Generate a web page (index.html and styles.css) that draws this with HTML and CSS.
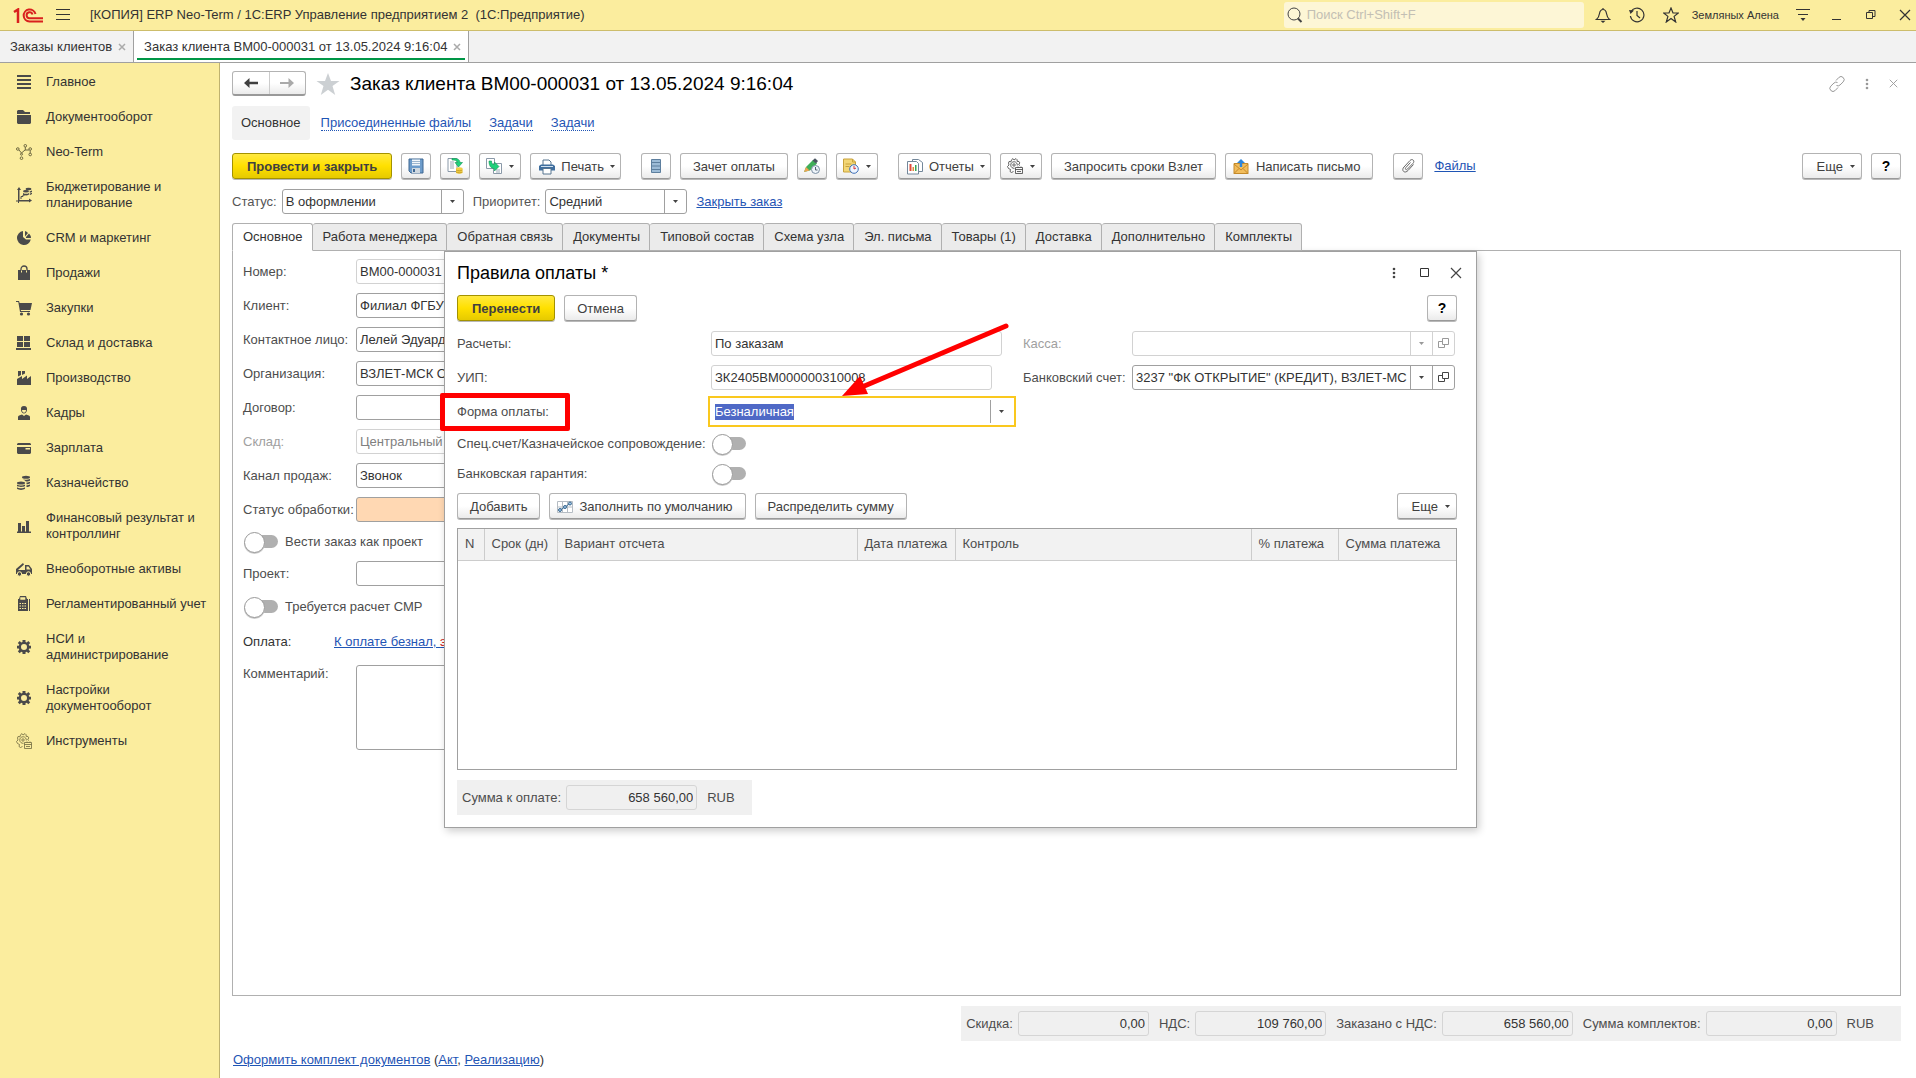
FILE: index.html
```html
<!DOCTYPE html>
<html lang="ru">
<head>
<meta charset="utf-8">
<title>Заказ клиента ВМ00-000031 от 13.05.2024 9:16:04</title>
<link rel="stylesheet" href="styles.css">
<script src="app.js" defer></script>
</head>
<body>
<svg class="sprite" aria-hidden="true">
  <symbol id="caret" viewBox="0 0 5 3"><path d="M0 0h5L2.500 3z" fill="currentColor"/></symbol>
  <symbol id="open" viewBox="0 0 11 11"><path d="M4.500.5h6v6h-6zM4.500 3.500h-4v6h6v-3" fill="none" stroke="currentColor"/></symbol>
  <symbol id="dots" viewBox="0 0 4 14"><g fill="currentColor"><circle cx="2" cy="3" r="1.300"/><circle cx="2" cy="7" r="1.300"/><circle cx="2" cy="11" r="1.300"/></g></symbol>
  <symbol id="cross" viewBox="0 0 12 12"><path d="M1 1l10 10M11 1L1 11" fill="none" stroke="currentColor" stroke-width="1.200"/></symbol>
  <symbol id="gear" viewBox="0 0 16 16"><path fill-rule="evenodd" fill="currentColor" d="M6.500 1h3v2l1.300.5L12.300 2l1.900 1.900-1.500 1.500.6 1.300H15v2.800h-1.700l-.6 1.300 1.500 1.500-1.900 1.900-1.500-1.500-1.300.5V15h-3v-1.800l-1.300-.5-1.500 1.500-1.900-1.900 1.500-1.500-.6-1.300H1V6.700h1.700l.6-1.300-1.500-1.500L3.700 2l1.500 1.500L6.500 3zM8 5a3 3 0 100 6 3 3 0 000-6z"/></symbol>
  <symbol id="geardoc" viewBox="0 0 16 16"><g fill="none" stroke="currentColor" stroke-width=".8"><path d="M6.500 13.500l-2 1-1.500-1 .5-2-2-1-1-2 1.500-1.500L1.500 5l.5-1.500 2 .3.500-2L6 .6l1 1.400 2-1.400 1.200 1.200-.2 1.500 2 .2.900 1.500-1.300 1.500 1.400 1"/><path d="M7.500 10.300A3.300 3.300 0 1110.300 7.500"/><circle cx="7" cy="7" r="1.200"/><path d="M8.500 9.500h7v6h-7zM8.500 11.500h7M10 13.500h4M11 8.500v1M14 8.500v1" /></g></symbol>
</svg>

<header class="titlebar">
  <svg class="logo" viewBox="0 0 30 15"><g fill="none" stroke="#d9201e"><path d="M1 4l4-2.500V15" stroke-width="2.500"/><path d="M22.500 6A6 6 0 1016.500 13.500H30" stroke-width="2"/><path d="M19.500 6.500A3 3 0 1016.500 10.300H30" stroke-width="2"/></g></svg>
  <button class="plain" aria-label="Меню"><svg width="14" height="12" viewBox="0 0 14 12"><path d="M0 .5h14M0 5.500h14M0 10.500h14" stroke="#333"/></svg></button>
  <span class="apptitle">[КОПИЯ] ERP Neo-Term / 1С:ERP Управление предприятием 2&nbsp; (1С:Предприятие)</span>
  <label class="search"><svg width="16" height="16" viewBox="0 0 16 16" fill="none" stroke="#444"><circle cx="7" cy="7" r="6"/><path d="M11 11.500l3.500 3.500" stroke-width="2"/></svg><input type="search" aria-label="Поиск" placeholder="Поиск Ctrl+Shift+F"></label>
  <div class="sys">
    <button class="plain" aria-label="Уведомления"><svg width="16" height="16" viewBox="0 0 16 16"><path d="M1.500 12.500c2-1.500 2.500-3 3-6 .4-2.500 1.500-4 3.500-4s3.100 1.500 3.500 4c.5 3 1 4.500 3 6zM8 1v2" fill="none" stroke="#333" stroke-width="1.200"/><path d="M5.500 13.800h5L8 16z" fill="#333"/></svg></button>
    <button class="plain" aria-label="История"><svg width="16" height="16" viewBox="0 0 16 16"><path d="M2 5a6.800 6.800 0 11-.6 4M8 4v4.500l3 2.500" fill="none" stroke="#333" stroke-width="1.200"/><path d="M0 3l5 .5L1.500 7z" fill="#333"/></svg></button>
    <button class="plain" aria-label="Избранное"><svg width="16" height="16" viewBox="0 0 16 16"><path d="M8 1l2 5h5.300l-4.200 3.400L12.700 15 8 11.500 3.300 15l1.600-5.600L.7 6H6z" fill="none" stroke="#333" stroke-width="1.200"/></svg></button>
  </div>
  <span class="user">Земляных Алена</span>
  <div class="sys wide">
    <button class="plain" aria-label="Настройки"><svg width="14" height="14" viewBox="0 0 14 14"><path d="M0 1.500h14M2 6.500h10" stroke="#333" stroke-width="1.200"/><path d="M4.500 10h5L7 13z" fill="#333"/></svg></button>
    <button class="plain" aria-label="Свернуть"><svg width="10" height="10" viewBox="0 0 10 10"><path d="M0 9.500h9" stroke="#333"/></svg></button>
    <button class="plain" aria-label="Восстановить"><svg width="10" height="10" viewBox="0 0 10 10"><path d="M.5 2.500h6v6h-6zM3 2V.5h6v6H7" fill="none" stroke="#333"/></svg></button>
    <button class="plain" aria-label="Закрыть"><svg width="12" height="12"><use href="#cross"/></svg></button>
  </div>
</header>

<nav class="wintabs">
  <div class="wintab"><a href="#list">Заказы клиентов</a><button class="plain close" aria-label="Закрыть вкладку"><svg width="8" height="8" viewBox="0 0 8 8"><path d="M1 1l6 6M7 1L1 7" stroke="currentColor" stroke-width="1.500"/></svg></button></div>
  <div class="wintab current"><a href="#order">Заказ клиента ВМ00-000031 от 13.05.2024 9:16:04</a><button class="plain close" aria-label="Закрыть вкладку"><svg width="8" height="8" viewBox="0 0 8 8"><path d="M1 1l6 6M7 1L1 7" stroke="currentColor" stroke-width="1.500"/></svg></button></div>
</nav>

<div class="body">
<nav class="sidebar">
  <a href="#s1"><svg viewBox="0 0 16 16"><path d="M1 1h14v2H1zM1 5h14v2H1zM1 9h14v2H1zM1 13h14v2H1z"/></svg><span>Главное</span></a>
  <a href="#s2"><svg viewBox="0 0 16 16"><path d="M2 1h5l2 2h5v2H1V2zM1 6h14v8l-1 1H2l-1-1z"/></svg><span>Документооборот</span></a>
  <a href="#s3"><svg viewBox="0 0 16 16" class="line olive"><circle cx="1.800" cy="5" r="1.300"/><circle cx="5.500" cy="14.200" r="1.300"/><circle cx="5.500" cy="10.200" r="1"/><circle cx="9.300" cy="1.800" r="1.300"/><circle cx="14.200" cy="5" r="1.300"/><circle cx="14.200" cy="10.500" r="1.300"/><path d="M3 6l2.500 3L9 6h4M9.300 3v3M14.200 6.300v3"/></svg><span>Neo-Term</span></a>
  <a href="#s4"><svg viewBox="0 0 16 16"><path d="M3 0l2 3H3.500v10H13v-1.500l3 2-3 2V14.500H3V16H2v-1.500H0v-1h2V3H1z"/><path d="M5 12V9.500h2V8h2V7" fill="none" stroke="#4a4a4a"/><ellipse cx="12.500" cy="2" rx="3" ry="1.300"/><ellipse cx="10" cy="4.300" rx="3" ry="1.200"/><path d="M7 6c2 1.300 5 1 6 0v1.500c-2 1.500-5 1-6 0zM13.500 4.500l2.500-1V5l-2 .8zM13.500 6.800l2.500-1v1.200l-2 1z"/></svg><span>Бюджетирование и планирование</span></a>
  <a href="#s5"><svg viewBox="0 0 16 16"><path d="M7 1a7 7 0 107.800 8.500H10L7 7zM9 1v5.500l3-3.500A6 6 0 009 1zM13 3.500L10 7v1h5a7 7 0 00-2-4.500z"/></svg><span>CRM и маркетинг</span></a>
  <a href="#s6"><svg viewBox="0 0 16 16"><path d="M2 5h12v10H2z"/><path d="M5 8V4a3 3 0 016 0v4" fill="none" stroke="#4a4a4a" stroke-width="1.300"/><path d="M5.500 5.500v2M10.500 5.500v2" stroke="#fbed9e"/></svg><span>Продажи</span></a>
  <a href="#s7"><svg viewBox="0 0 16 16"><path d="M0 1h3l.6 2H16l-1.500 7H4.800l.2 1h9v1H4L2.300 2H0z"/><circle cx="5.500" cy="14" r="1.600"/><circle cx="12.500" cy="14" r="1.600"/></svg><span>Закупки</span></a>
  <a href="#s8"><svg viewBox="0 0 16 16"><path d="M1 1h6v5H1zM8 1h6v5H8zM1 7h6v5H1zM8 7h6v5H8zM0 13h15v2H0z"/></svg><span>Склад и доставка</span></a>
  <a href="#s9"><svg viewBox="0 0 16 16"><path d="M2 1h3v4L2 6.500zM6 1h3v2.500L6 5zM1 9l5-3v3l5-3.500V9l4-3v9H1z"/></svg><span>Производство</span></a>
  <a href="#s10"><svg viewBox="0 0 16 16"><path d="M8 1c2.500 0 3.300 1.500 3 4-.3 2-1.500 3.500-3 3.500S5.300 7 5 5c-.3-2.500.5-4 3-4zM2 15v-3c0-1.500 2-2 4-2.500l2 1.500 2-1.500c2 .5 4 1 4 2.500v3z"/><path d="M6 5h4c0 2-1 2.700-2 2.700S6 7 6 5z" fill="#fbed9e"/></svg><span>Кадры</span></a>
  <a href="#s11"><svg viewBox="0 0 16 16"><path fill-rule="evenodd" d="M2 3h12l1 1v1H1V4zM1 7h14v6l-1 1H2l-1-1zM9.500 8v1.500H14V8z"/></svg><span>Зарплата</span></a>
  <a href="#s12"><svg viewBox="0 0 16 16"><ellipse cx="10" cy="2.300" rx="4" ry="1.500"/><path d="M7 4c2 1.200 5 1 7 0v1.500c-1 1-3 1.200-4 1zM10.500 7.500c1.500 0 2.500-.3 3.500-.8v1.500c-1 .8-2 1-3.500 1zM10.500 10.200c1.500 0 2.500-.3 3.500-.8V11c-1 .8-2 1-3.500 1z"/><ellipse cx="5" cy="8" rx="4" ry="1.500"/><path d="M1 9.500c2 1.300 6 1.300 8 0V11c-2 1.200-6 1.200-8 0zM1 12.300c2 1.300 6 1.300 8 0v1.500c-2 1.500-6 1.500-8 0z"/></svg><span>Казначейство</span></a>
  <a href="#s13"><svg viewBox="0 0 16 16"><path d="M1 13.500h14V15H1zM2 5h3v9H2zM6 8h3v6H6zM10 3h3v11h-3z"/></svg><span>Финансовый результат и контроллинг</span></a>
  <a href="#s14"><svg viewBox="0 0 16 16"><path d="M0 8l7-6 1 1.500-6 5.500h7V4h4l3 4v5H0zM10.500 5.500v3h4l-2-3z" fill-rule="evenodd"/><circle cx="3.500" cy="13" r="2.200" stroke="#fbed9e"/><circle cx="12.500" cy="13" r="2.200" stroke="#fbed9e"/></svg><span>Внеоборотные активы</span></a>
  <a href="#s15"><svg viewBox="0 0 16 16"><path d="M4 0h6l1 3h1v12H2V3h1zM4.300 1.300v2.500h5V1.300zM13 3h1v12h-1z" fill-rule="evenodd"/><path d="M3.500 7.500h7M3.500 10h7M3.500 12.500h7" stroke="#fbed9e" stroke-dasharray="1.500 1"/></svg><span>Регламентированный учет</span></a>
  <a href="#s16"><svg><use href="#gear"/></svg><span>НСИ и<br>администрирование</span></a>
  <a href="#s17"><svg><use href="#gear"/></svg><span>Настройки<br>документооборот</span></a>
  <a href="#s18"><svg class="olive"><use href="#geardoc"/></svg><span>Инструменты</span></a>
</nav>

<main class="page">
  <div class="head">
    <div class="navpair"><button aria-label="Назад"><svg width="14" height="10" viewBox="0 0 14 10"><path d="M5.500 0v3.800H14v2.400H5.500V10L0 5z" fill="#404040"/></svg></button><button aria-label="Вперед"><svg width="14" height="10" viewBox="0 0 14 10"><path d="M8.500 0v4H0v2h8.500v4L14 5z" fill="#aaa"/></svg></button></div>
    <svg class="fav" viewBox="0 0 24 22"><path d="M12 0l3 8h8.500l-7 5 2.700 9L12 16.800 4.800 22l2.700-9-7-5H9z" fill="#ccd0d3"/></svg>
    <h1>Заказ клиента ВМ00-000031 от 13.05.2024 9:16:04</h1>
    <div class="headtools">
      <button class="plain" aria-label="Получить ссылку"><svg width="16" height="16" viewBox="0 0 16 16" fill="none" stroke="#999"><path d="M7 4.500l2.800-3a3 3 0 014.400 4.400L11 9a3 3 0 01-3.500.5M9 11.500l-2.800 3a3 3 0 01-4.400-4.400L5 7a3 3 0 013.500-.5"/></svg></button>
      <button class="plain" aria-label="Действия"><svg width="4" height="14"><use href="#dots"/></svg></button>
      <button class="plain" aria-label="Закрыть"><svg width="9" height="9"><use href="#cross"/></svg></button>
    </div>
  </div>

  <nav class="subnav"><span class="here">Основное</span><a href="#f">Присоединенные файлы</a><a href="#t1">Задачи</a><a href="#t2">Задачи</a></nav>

  <div class="toolbar">
    <div class="group">
      <button class="btn primary">Провести и закрыть</button>
      <button class="btn icon" aria-label="Записать"><svg viewBox="0 0 16 16"><path d="M1 1h14v14H3l-2-2z" fill="#6d9ccb" stroke="#3f6791"/><path d="M4 1.500h8v6H4z" fill="#f3f7fb"/><path d="M4 3.500h8M4 5.500h8" stroke="#9db6cf"/><path d="M4 10h8v5H4z" fill="#cfd8e0"/><path d="M5 11h2v3H5z" fill="#3f6791"/></svg></button>
      <button class="btn icon" aria-label="Провести"><svg viewBox="0 0 16 16"><path d="M1 .5h9v13H1z" fill="#fff" stroke="#8a99a8"/><path d="M3 4h4M3 6h4M3 8h4M3 10h4" stroke="#9aa8b5"/><path d="M5 .5c5-.5 8 1 8 4h2.500L11.500 9 8 4.500h2.500C10 2.500 8 2 5 2z" fill="#1fd07a" stroke="#119552" stroke-width=".6"/><path d="M9 10c2-1 5-1 6.500 0v5c-1.500 1-5 1-6.500 0z" fill="#f1cf45"/><path d="M9 12c2 1 5 1 6.500 0M9 14c2 1 5 1 6.500 0" fill="none" stroke="#b78f1c" stroke-width=".7"/></svg></button>
      <button class="btn drop" aria-label="Создать на основании"><svg viewBox="0 0 16 16"><path d="M.5.5h8v10h-8z" fill="#fff" stroke="#8a99a8"/><path d="M7.500 5.500h8v10h-8z" fill="#fff" stroke="#8a99a8"/><path d="M10 12h4M10 14h4" stroke="#9aa8b5"/><path d="M3 3h2.500c0 2.500 1 3.500 3 3.500V4l4.500 4.500L8.500 13v-2.500C5 10.500 3 8 3 3z" fill="#1fd07a" stroke="#119552" stroke-width=".6"/></svg><svg class="car"><use href="#caret"/></svg></button>
      <button class="btn wide"><svg viewBox="0 0 16 16"><path d="M4 6V1h6l2 2v3" fill="#fff" stroke="#57748f"/><path d="M2 5.500h12l2 1.500v4.500H0V7z" fill="#3f6e9e"/><path d="M2 7.500h12" stroke="#cfe0ef"/><path d="M4 9.500h8v5.500H4z" fill="#fff" stroke="#57748f"/></svg>Печать<svg class="car"><use href="#caret"/></svg></button>
    </div>
    <div class="group">
      <button class="btn icon" aria-label="Структура"><svg viewBox="0 0 16 16"><path d="M3.500 1.500h9v13h-9z" fill="#9cbbd6" stroke="#5d7f9e"/><path d="M3.500 4.500h9M3.500 8h9M3.500 11.500h9" stroke="#5d7f9e"/></svg></button>
      <button class="btn">Зачет оплаты</button>
      <button class="btn icon" aria-label="Запланировать"><svg viewBox="0 0 16 16"><path d="M0 14l2-5 7-7 4 3.500-7 7z" fill="#3fae59"/><path d="M0 14l2-5 3.500 3.500z" fill="#f0a450"/><path d="M8.500 2.500L11 .3 14 3l-2 2.500z" fill="#4a5560"/><circle cx="11.500" cy="11.500" r="4" fill="#eef4fa" stroke="#7a8ea2"/><path d="M11.500 9v3h2" fill="none" stroke="#506070"/></svg></button>
      <button class="btn drop" aria-label="Напоминание"><svg viewBox="0 0 16 16"><path d="M.5 1h9l3 3v10H.5z" fill="#f3d777" stroke="#c8a23c"/><path d="M9.500 1v3h3M2.500 6h6M2.500 8.500h4" fill="none" stroke="#c8a23c"/><circle cx="11" cy="11" r="4.300" fill="#eef5ff" stroke="#3f70b8"/><path d="M11 8v3l2-1" fill="none" stroke="#d33"/></svg><svg class="car"><use href="#caret"/></svg></button>
    </div>
    <div class="group">
      <button class="btn wide"><svg viewBox="0 0 16 16"><path d="M5.500.5h6l4 3v9h-10z" fill="#fff" stroke="#73879a"/><path d="M.5 2.500h9l2 2v10.500H.5z" fill="#fff" stroke="#73879a"/><path d="M2.500 5h2v7h-2z" fill="#e04b3a"/><path d="M5.500 8h1.500v4H5.500z" fill="#e08a3a"/><path d="M8 6h1.500v6H8z" fill="#35a853"/></svg>Отчеты<svg class="car"><use href="#caret"/></svg></button>
      <button class="btn drop" aria-label="Настройки"><svg viewBox="0 0 16 16"><use href="#geardoc"/></svg><svg class="car"><use href="#caret"/></svg></button>
      <button class="btn">Запросить сроки Взлет</button>
      <button class="btn mail"><svg viewBox="0 0 16 16"><path d="M1 4.500h14v10H1z" fill="#f2bd5c" stroke="#c48a2a"/><path d="M1 5l7 6 7-6M1 14.500l5-5M15 14.500l-5-5" fill="none" stroke="#c48a2a"/><path d="M8 0l4 4H9.200v4H6.800V4H4z" fill="#2c86dc"/></svg>Написать письмо</button>
    </div>
    <div class="group">
      <button class="btn icon" aria-label="Присоединить"><svg viewBox="0 0 16 16" fill="none" stroke="#666"><path d="M13.500 6.500L8 12.500c-1.500 1.500-3 2-4.300 1s-1.200-3 .3-4.500l6-6.500c1-1 2.300-1.300 3.200-.4s.8 2.200-.2 3.200L7.500 11c-.6.700-1.300.8-1.800.4s-.4-1.200.2-1.900L10.500 4.500"/></svg></button>
      <a class="files" href="#files">Файлы</a>
    </div>
    <div class="group end">
      <button class="btn more">Еще<svg class="car"><use href="#caret"/></svg></button>
      <button class="btn icon help">?</button>
    </div>
  </div>

  <div class="statusrow">
    <label for="st">Статус:</label>
    <div class="combo st"><select id="st"><option>В оформлении</option></select><span class="cell"><svg class="car"><use href="#caret"/></svg></span></div>
    <label for="pr" class="next">Приоритет:</label>
    <div class="combo pr"><select id="pr"><option>Средний</option></select><span class="cell"><svg class="car"><use href="#caret"/></svg></span></div>
    <a class="next" href="#close">Закрыть заказ</a>
  </div>

  <div class="tabs" role="tablist">
    <button role="tab" aria-selected="true">Основное</button><button role="tab">Работа менеджера</button><button role="tab">Обратная связь</button><button role="tab">Документы</button><button role="tab">Типовой состав</button><button role="tab">Схема узла</button><button role="tab">Эл. письма</button><button role="tab">Товары (1)</button><button role="tab">Доставка</button><button role="tab">Дополнительно</button><button role="tab">Комплекты</button>
  </div>

  <section class="panel">
    <form class="order">
      <label for="o1">Номер:</label><input class="fld ro" id="o1" value="ВМ00-000031" readonly>
      <label for="o2">Клиент:</label><input class="fld" id="o2" value="Филиал ФГБУ">
      <label for="o3">Контактное лицо:</label><input class="fld" id="o3" value="Лелей Эдуард">
      <label for="o4">Организация:</label><input class="fld" id="o4" value="ВЗЛЕТ-МСК ООО">
      <label for="o5">Договор:</label><input class="fld" id="o5">
      <label for="o6" class="off">Склад:</label><input class="fld ro off" id="o6" value="Центральный" disabled>
      <label for="o7">Канал продаж:</label><input class="fld" id="o7" value="Звонок">
      <label for="o8">Статус обработки:</label><input class="fld warn" id="o8">
      <label class="check span"><input type="checkbox" class="toggle">Вести заказ как проект</label>
      <label for="o9">Проект:</label><input class="fld" id="o9">
      <label class="check tall span"><input type="checkbox" class="toggle">Требуется расчет СМР</label>
      <div class="pay span"><span>Оплата:</span><a href="#pay">К оплате безнал, <em>этапы</em></a></div>
      <label for="o10" class="top">Комментарий:</label><textarea class="fld area" id="o10"></textarea>
    </form>
  </section>

  <div class="totals">
    <label for="t1">Скидка:</label><input class="fld sum" id="t1" value="0,00" readonly>
    <label for="t2">НДС:</label><input class="fld sum" id="t2" value="109 760,00" readonly>
    <label for="t3">Заказано с НДС:</label><input class="fld sum" id="t3" value="658 560,00" readonly>
    <label for="t4">Сумма комплектов:</label><input class="fld sum" id="t4" value="0,00" readonly>
    <span>RUB</span>
  </div>
  <div class="bottom"><a href="#kit">Оформить комплект документов</a> (<a href="#act">Акт</a>, <a href="#real">Реализацию</a>)</div>
</main>
</div>

<section class="dialog" role="dialog" aria-labelledby="dt">
  <div class="dhead"><h2 id="dt">Правила оплаты *</h2>
    <div class="dtools">
      <button class="plain" aria-label="Действия"><svg width="4" height="14"><use href="#dots"/></svg></button>
      <button class="plain" aria-label="Развернуть"><svg width="10" height="10" viewBox="0 0 10 10"><path d="M.5.5h8v8h-8z" fill="none" stroke="#333"/></svg></button>
      <button class="plain" aria-label="Закрыть"><svg width="12" height="12"><use href="#cross"/></svg></button>
    </div>
  </div>
  <div class="dbar"><button class="btn primary">Перенести</button><button class="btn">Отмена</button><button class="btn icon help end">?</button></div>
  <div class="dform">
    <label for="d1">Расчеты:</label><input class="fld ro w1" id="d1" value="По заказам" readonly>
    <label for="d2" class="off">Касса:</label><div class="combo ro"><input id="d2" disabled><span class="cell"><svg class="car"><use href="#caret"/></svg></span><span class="cell"><svg class="opn"><use href="#open"/></svg></span></div>
    <label for="d3">УИП:</label><input class="fld ro w2" id="d3" value="ЗК2405ВМ000000310008" readonly>
    <label for="d4">Банковский счет:</label><div class="combo"><input id="d4" value="3237 &quot;ФК ОТКРЫТИЕ&quot; (КРЕДИТ), ВЗЛЕТ-МСК"><span class="cell"><svg class="car"><use href="#caret"/></svg></span><span class="cell"><svg class="opn"><use href="#open"/></svg></span></div>
    <label for="form">Форма оплаты:</label><div class="combo active"><input id="form" value="Безналичная"><span class="cell"><svg class="car"><use href="#caret"/></svg></span></div>
    <label for="d6" class="row">Спец.счет/Казначейское сопровождение:</label><input type="checkbox" class="toggle" id="d6">
    <label for="d7" class="row">Банковская гарантия:</label><input type="checkbox" class="toggle" id="d7">
  </div>
  <div class="dbar"><button class="btn">Добавить</button><button class="btn fill"><svg viewBox="0 0 16 16"><path d="M.5 2.500h15v11H.5zM.5 8h15M5.500 2.500v11M10.500 2.500v11" fill="#fff" stroke="#b5bcc3"/><path d="M3 11l5-3 5-3.500" fill="none" stroke="#49779f"/><g fill="#9cc3e6" stroke="#39688f"><circle cx="3" cy="11" r="1.500"/><circle cx="8" cy="8" r="1.500"/><circle cx="13" cy="4.500" r="1.500"/></g></svg>Заполнить по умолчанию</button><button class="btn">Распределить сумму</button><button class="btn more end">Еще<svg class="car"><use href="#caret"/></svg></button></div>
  <div class="grid"><table>
    <colgroup><col class="c1"><col class="c2"><col class="c3"><col class="c4"><col class="c5"><col class="c6"><col class="c7"></colgroup>
    <thead><tr><th>N</th><th>Срок (дн)</th><th>Вариант отсчета</th><th>Дата платежа</th><th>Контроль</th><th>% платежа</th><th>Сумма платежа</th></tr></thead>
    <tbody></tbody>
  </table></div>
  <div class="totals dsum"><label for="ds">Сумма к оплате:</label><input class="fld sum" id="ds" value="658 560,00" readonly><span>RUB</span></div>
</section>

<div class="mark"></div>
<svg class="arrow" viewBox="0 0 176 82"><path d="M164 6L20 67" stroke="#f00" stroke-width="5" stroke-linecap="round"/><path d="M0 76l18-20 8 18z" fill="#f00"/></svg>
</body>
</html>
```
FILE: styles.css
```css
* { box-sizing: border-box; }
body {
  margin: 0;
  min-height: 100vh;
  display: flex;
  flex-direction: column;
  position: relative;
  font: 13px/16px "Liberation Sans", Arial, sans-serif;
  color: #333;
  background: #fff;
}
button, input, select, textarea { font: inherit; color: inherit; }
button { margin: 0; }
a { color: #1f55b5; }
.sprite { display: none; }
.plain { border: 0; background: none; padding: 0; display: flex; align-items: center; justify-content: center; }

.titlebar {
  height: 31px;
  display: flex;
  align-items: center;
  background: #fbed9e;
  border-bottom: 1px solid #cdbd6b;
  padding: 0 5px 0 13px;
}
.logo { width: 30px; height: 15px; margin-right: 13px; }
.apptitle { margin-left: 20px; }
.search {
  margin-left: auto;
  width: 300px;
  height: 26px;
  border-radius: 3px;
  background: #fdf6d6;
  display: flex;
  align-items: center;
  padding-left: 3px;
  gap: 4px;
}
.search input { flex: 1; border: 0; background: none; padding: 0; outline: 0; }
.search input::placeholder { color: #c3bfb4; }
.sys { display: flex; gap: 2px; margin-left: 3px; }
.sys .plain { width: 32px; height: 26px; }
.user { font-size: 11px; margin-left: 5px; }
.sys.wide { margin-left: 8px; margin-right: -10px; }

.wintabs { height: 32px; display: flex; background: #f2f2f2; border-bottom: 1px solid #a0a0a0; }
.wintab { display: flex; align-items: center; gap: 6px; padding: 0 7px 0 10px; border-right: 1px solid #a0a0a0; }
.wintab a { color: #333; text-decoration: none; }
.wintab .close { color: #aaa; }
.wintab.current { background: linear-gradient(#009646, #009646) center bottom 2px / calc(100% - 6px) 2px no-repeat #fff; }

.body { flex: 1; display: flex; }
.sidebar { width: 220px; flex: none; background: #fbed9e; border-right: 1px solid #bfb26f; padding-top: 2px; }
.sidebar a { display: flex; align-items: center; gap: 14px; padding: 9px 4px 10px 16px; color: #333; text-decoration: none; }
.sidebar svg { width: 16px; height: 16px; flex: none; fill: #4a4a4a; color: #4a4a4a; }
.sidebar svg.olive { color: #6e6840; }
.sidebar svg.line { fill: none; stroke: #6e6840; }

.page { flex: 1; min-width: 0; display: flex; flex-direction: column; padding: 8px 15px 0 12px; }
.head { display: flex; align-items: center; height: 25px; }
.navpair { display: flex; width: 74px; height: 25px; border: 1px solid #b3b3b3; border-bottom: 2px solid #999; border-radius: 3px; background: linear-gradient(#fff 50%, #ebebeb); }
.navpair button { flex: 1; border: 0; background: none; padding: 0; display: flex; align-items: center; justify-content: center; }
.navpair button + button { border-left: 1px solid #ccc; }
.fav { width: 24px; height: 22px; margin: 0 10px; }
h1, h2 { margin: 0; font-size: 18px; line-height: 22px; font-weight: 400; color: #000; }
h1 { font-size: 19px; }
.headtools { margin-left: auto; display: flex; align-items: center; gap: 20px; margin-right: 3px; color: #999; }

.subnav { display: flex; align-items: center; height: 34px; margin: 10px 0 13px; }
.subnav .here { background: #f2f2f2; border-radius: 3px; padding: 9px; margin-right: 11px; }
.subnav a { text-decoration: none; border-bottom: 1px dotted #1f55b5; line-height: 15px; margin-right: 18px; }

.toolbar { display: flex; gap: 20px; }
.group { display: flex; gap: 9px; align-items: center; }
.end { margin-left: auto; }
.btn {
  height: 26px;
  padding: 1px 12px 0;
  display: inline-flex;
  align-items: center;
  justify-content: center;
  white-space: nowrap;
  color: #404040;
  border: 1px solid #b3b3b3;
  border-bottom-color: #999;
  box-shadow: 0 1px #b8b8b8;
  border-radius: 3px;
  background: linear-gradient(#fff 50%, #ebebeb);
}
.btn svg { width: 16px; height: 16px; flex: none; }
svg.car, .btn svg.car { width: 5px; height: 3px; }
.btn.icon { width: 30px; padding: 0; }
.btn.drop { width: 42px; padding: 0; gap: 7px; }
.btn.wide { padding: 1px 5px 0 8px; }
.btn.wide svg:first-child { margin-right: 6px; }
.btn.wide .car { margin-left: 6px; }
.btn.mail { padding: 1px 12px 0 7px; gap: 7px; }
.btn.more { padding: 1px 6px 0 14px; gap: 7px; }
.btn.primary { font-weight: 700; padding: 1px 14px 0; border-color: #a39200; background: linear-gradient(#ffe940, #ffe000 50%, #e6ca00); }
.help { font-size: 14px; font-weight: 700; color: #000; }
.files { margin-left: 2px; }

.statusrow { display: flex; align-items: center; margin: 10px 0 9px; }
.statusrow label { color: #555; margin-right: 5px; }
.next { margin-left: 9px; }
.combo { display: flex; height: 25px; border: 1px solid #a0a0a0; border-radius: 3px; background: #fff; min-width: 0; }
.combo.st { width: 182px; }
.combo.pr { width: 142px; }
.combo select, .combo input { appearance: none; flex: 1; min-width: 0; border: 0; background: none; padding: 0 0 0 3px; outline: 0; }
.combo input { margin-right: 3px; }
.combo .cell { width: 22px; flex: none; border-left: 1px solid #a0a0a0; display: flex; align-items: center; justify-content: center; color: #444; }
.combo.ro, .combo.ro .cell { border-color: #d2d2d2; color: #999; }
.opn { width: 11px; height: 11px; }
.combo.active { border-color: transparent; outline: 2px solid #fac81e; outline-offset: 1px; border-radius: 0; }
.combo.active ::selection { background: #4f69c6; color: #fff; }

.tabs { display: flex; position: relative; z-index: 1; margin-bottom: -1px; }
.tabs button { height: 28px; padding: 0 9px 0 10px; border: 1px solid #b0b0b0; border-left-width: 0; border-radius: 3px 3px 0 0; background: #ebebeb; white-space: nowrap; }
.tabs button:first-child { border-left-width: 1px; background: #fff; border-bottom-color: #fff; }
.panel { flex: 1; border: 1px solid #b0b0b0; padding: 8px 10px; }
.order { display: grid; grid-template-columns: 113px 250px; row-gap: 9px; align-items: center; }
.order label, .dform label { color: #4d4d4d; white-space: nowrap; }
.span { grid-column: 1 / 3; }
.fld { width: 100%; height: 25px; border: 1px solid #a0a0a0; border-radius: 3px; background: #fff; padding: 0 3px; margin: 0; outline: 0; }
.fld.ro { border-color: #d2d2d2; }
.order .off, .dform .off { color: #a0a0a0; }
.order .fld.off { color: #808080; }
.fld.warn { background: #ffd8b3; }
.fld.area { height: 85px; resize: none; display: block; }
.check { display: flex; align-items: center; gap: 7px; height: 21px; }
.check.tall { height: 24px; }
.pay { display: flex; height: 28px; align-items: center; color: #333; }
.pay span { width: 91px; }
.pay em { font-style: normal; color: #c22; }
.top { align-self: start; padding-top: 1px; }
.toggle { appearance: none; margin: 0 0 0 1px; width: 34px; height: 20px; position: relative; }
.toggle::before { content: ""; position: absolute; inset: 3px 0 4px 8px; border-radius: 7px; background: #b0b0b0; }
.toggle::after { content: ""; position: absolute; left: 0; top: 0; width: 19px; height: 19px; border-radius: 50%; border: 1px solid #999; background: #fff; box-shadow: 0 1px #ccc; }

.totals { display: flex; align-items: center; height: 35px; background: #f0f0f0; color: #4d4d4d; margin-top: 10px; align-self: flex-end; padding: 0 27px 0 5px; white-space: nowrap; }
.totals label { margin-right: 5px; }
.fld.sum { width: 131px; height: 25px; background: none; border-color: #d5d5d5; text-align: right; margin-right: 10px; color: #333; }
.bottom { height: 37px; line-height: 37px; padding-left: 1px; }

.dialog {
  position: absolute;
  left: 444px;
  top: 251px;
  width: 1033px;
  background: #fff;
  border: 1px solid #a0a0a0;
  box-shadow: 2px 3px 8px rgba(0, 0, 0, .2);
  padding: 10px 19px 12px 12px;
}
.dhead { display: flex; align-items: center; height: 22px; }
.dtools { margin-left: auto; display: flex; align-items: center; gap: 20px; margin-right: -5px; color: #444; }
.dtools .plain:nth-child(2) { margin-left: 4px; }
.dbar { display: flex; gap: 9px; }
.dhead + .dbar { margin: 11px 0 10px; }
.dform { display: grid; grid-template-columns: 254px 302px 119px 1fr; row-gap: 9px; align-items: center; padding-right: 2px; margin-bottom: 9px; }
.dform label:nth-of-type(even) { padding-left: 10px; }
.dform label.row { grid-column: 1; padding: 0; line-height: 21px; }
.w1 { width: 291px; }
.w2 { width: 281px; }
.btn.fill { padding: 1px 12px 0 7px; gap: 6px; }
.grid { margin-top: 9px; height: 242px; border: 1px solid #a0a0a0; }
table { width: 100%; table-layout: fixed; border-collapse: collapse; }
th { height: 31px; padding: 0 0 0 7px; font-weight: 400; text-align: left; color: #4d4d4d; background: #f2f2f2; border-right: 1px solid #ccc; border-bottom: 1px solid #ccc; white-space: nowrap; }
th:last-child { border-right: 0; }
.c1 { width: 26px; }
.c2 { width: 73px; }
.c3 { width: 300px; }
.c4 { width: 98px; }
.c5 { width: 296px; }
.c6 { width: 87px; }
.dsum { width: 295px; }

.mark { position: absolute; left: 440px; top: 393px; width: 130px; height: 38px; border: 5px solid #f00; border-radius: 2px; }
.arrow { position: absolute; left: 842px; top: 320px; width: 176px; height: 82px; }
```
FILE: app.js
```js
const field = document.getElementById("form");
field.focus();
field.select();
```
